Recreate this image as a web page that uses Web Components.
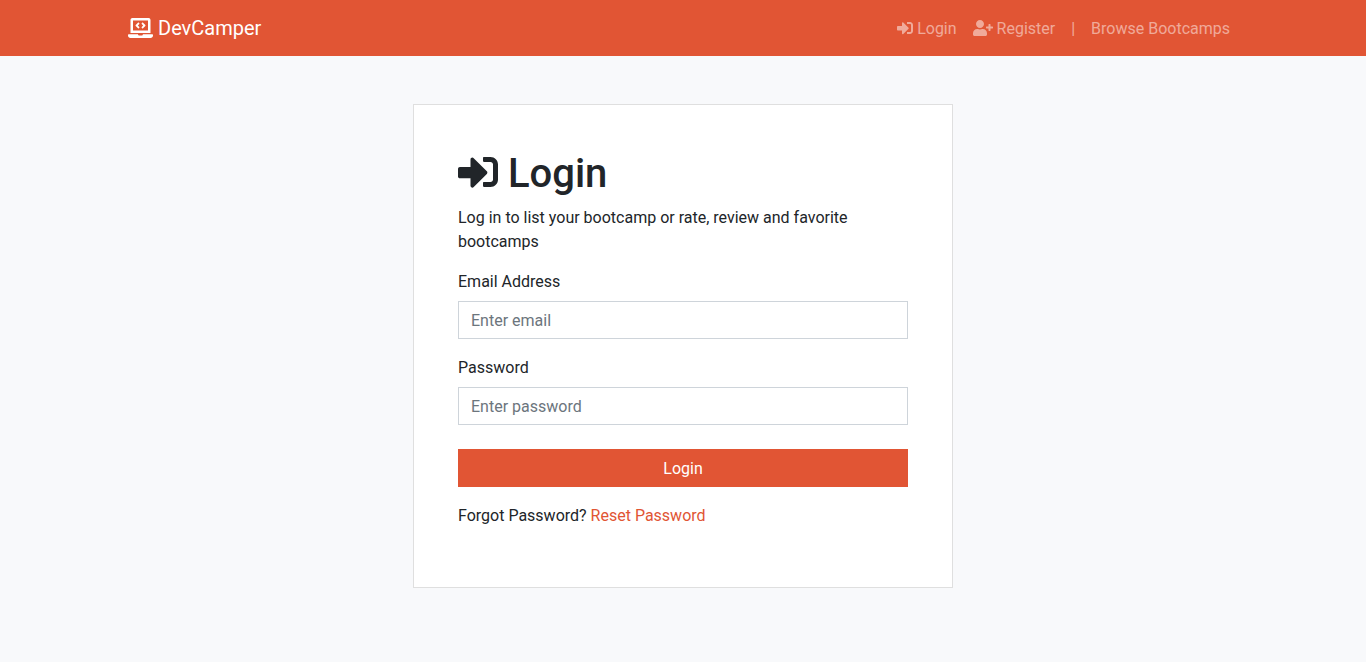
<!DOCTYPE html>
<html lang="en">
<head>
<meta charset="utf-8">
<meta name="viewport" content="width=device-width, initial-scale=1">
<title>DevCamper | Login</title>
<style>
  :root {
    --primary: #e15534;
    --dark: #212529;
    --muted: #6c757d;
    --light: #f8f9fb;
    --input-border: #ced4da;
  }
  body {
    margin: 0;
    background: var(--light);
    color: var(--dark);
    font: 400 16px/24px Roboto, "Liberation Sans", sans-serif;
  }
</style>
</head>
<body>
<site-navbar>
  <site-icon slot="brand" name="laptop-code"></site-icon>
  <span slot="brand">DevCamper</span>
  <nav-item href="#login"><site-icon name="sign-in"></site-icon> Login</nav-item>
  <nav-item href="#register"><site-icon name="user-plus"></site-icon> Register</nav-item>
  <nav-item>|</nav-item>
  <nav-item href="#bootcamps">Browse Bootcamps</nav-item>
</site-navbar>
<main>
  <page-card>
    <login-form></login-form>
  </page-card>
</main>

<script>
const ICONS = {
  'sign-in': [512, 'M416 448h-84c-6.6 0-12-5.4-12-12v-40c0-6.6 5.4-12 12-12h84c17.7 0 32-14.3 32-32V160c0-17.7-14.3-32-32-32h-84c-6.6 0-12-5.4-12-12V76c0-6.6 5.4-12 12-12h84c53 0 96 43 96 96v192c0 53-43 96-96 96zm-47-201L201 79c-15-15-41-4.5-41 17v96H24c-13.3 0-24 10.7-24 24v96c0 13.3 10.7 24 24 24h136v96c0 21.5 26 32 41 17l168-168c9.3-9.4 9.3-24.6 0-34z'],
  'user-plus': [640, 'M624 208h-64v-64c0-8.8-7.2-16-16-16h-32c-8.8 0-16 7.2-16 16v64h-64c-8.8 0-16 7.2-16 16v32c0 8.8 7.2 16 16 16h64v64c0 8.8 7.2 16 16 16h32c8.8 0 16-7.2 16-16v-64h64c8.8 0 16-7.2 16-16v-32c0-8.8-7.2-16-16-16zm-400 48c70.7 0 128-57.3 128-128S294.7 0 224 0 96 57.3 96 128s57.3 128 128 128zm89.6 32h-16.7c-22.2 10.2-46.9 16-72.9 16s-50.6-5.8-72.9-16h-16.7C60.2 288 0 348.2 0 422.4V464c0 26.5 21.5 48 48 48h352c26.5 0 48-21.5 48-48v-41.6c0-74.2-60.2-134.4-134.4-134.4z'],
  'laptop-code': [640, 'M255.03 261.65c6.25 6.25 16.38 6.25 22.63 0l11.31-11.31c6.25-6.25 6.25-16.38 0-22.63L253.25 192l35.71-35.72c6.25-6.25 6.25-16.38 0-22.63l-11.31-11.31c-6.25-6.25-16.38-6.25-22.63 0l-58.34 58.34c-6.25 6.25-6.25 16.38 0 22.63l58.35 58.34zm96.01-11.3l11.31 11.31c6.25 6.25 16.38 6.25 22.63 0l58.34-58.34c6.25-6.25 6.25-16.38 0-22.63l-58.34-58.34c-6.25-6.25-16.38-6.25-22.63 0l-11.31 11.31c-6.25 6.25-6.25 16.38 0 22.63L386.75 192l-35.71 35.72c-6.25 6.25-6.25 16.38 0 22.63zM624 416H381.54c-.74 19.81-14.71 32-32.74 32H288c-18.69 0-33.02-17.47-32.77-32H16c-8.8 0-16 7.2-16 16v16c0 35.2 28.8 64 64 64h512c35.2 0 64-28.8 64-64v-16c0-8.8-7.2-16-16-16zM576 48c0-26.4-21.6-48-48-48H112C85.6 0 64 21.6 64 48v336h512V48zm-64 272H128V64h384v256z']
};

class SiteIcon extends HTMLElement {
  constructor() {
    super();
    this.attachShadow({ mode: 'open' });
  }
  connectedCallback() {
    const [width, path] = ICONS[this.getAttribute('name')];
    this.shadowRoot.innerHTML = `
      <style>
        :host { display: inline-block; height: 1em; line-height: 1; vertical-align: -0.125em; }
        svg { display: block; height: 1em; fill: currentColor; }
      </style>
      <svg viewBox="0 0 ${width} 512" aria-hidden="true"><path d="${path}"/></svg>`;
  }
}

class SiteNavbar extends HTMLElement {
  constructor() {
    super();
    this.attachShadow({ mode: 'open' }).innerHTML = `
      <style>
        :host { display: block; background: var(--primary); color: #fff; }
        nav {
          display: flex; flex-wrap: wrap; align-items: center; justify-content: space-between;
          max-width: 1110px; margin: 0 auto; padding: 8px 16px;
        }
        .brand {
          display: flex; align-items: center; gap: 5px; padding: 5px 0;
          color: inherit; font-size: 20px; line-height: 30px; text-decoration: none;
        }
        .links { display: flex; flex-wrap: wrap; }
      </style>
      <nav aria-label="Main">
        <a class="brand" href="#home"><slot name="brand"></slot></a>
        <div class="links"><slot></slot></div>
      </nav>`;
  }
}

class NavItem extends HTMLElement {
  constructor() {
    super();
    this.attachShadow({ mode: 'open' });
  }
  connectedCallback() {
    const href = this.getAttribute('href');
    const tag = href ? 'a' : 'span';
    this.shadowRoot.innerHTML = `
      <style>
        :host { display: block; }
        a, span { display: block; padding: 9px 8px 7px; color: rgba(255, 255, 255, .5); text-decoration: none; }
        a:hover { color: rgba(255, 255, 255, .75); }
      </style>
      <${tag}${href ? ` href="${href}"` : ''}><slot></slot></${tag}>`;
  }
}

class PageCard extends HTMLElement {
  constructor() {
    super();
    this.attachShadow({ mode: 'open' }).innerHTML = `
      <style>
        :host { display: block; padding: 48px 16px; }
        section {
          box-sizing: border-box; max-width: 540px; margin: 0 auto; padding: 45px 44px 43px;
          background: #fff; border: 1px solid #dfdfdf;
        }
      </style>
      <section><slot></slot></section>`;
  }
}

class FormField extends HTMLElement {
  static formAssociated = true;
  constructor() {
    super();
    this.internals = this.attachInternals();
    this.attachShadow({ mode: 'open' });
  }
  connectedCallback() {
    this.shadowRoot.innerHTML = `
      <style>
        :host { display: block; }
        label { display: block; margin-bottom: 7px; }
        input {
          display: block; box-sizing: border-box; width: 100%; height: 38px; margin: 0; padding: 6px 12px;
          border: 1px solid var(--input-border); border-radius: 0; background: #fff;
          color: #495057; font: inherit;
        }
        input::placeholder { color: var(--muted); opacity: 1; }
        input:focus { outline: 0; border-color: var(--primary); }
      </style>
      <label for="control">${this.getAttribute('label')}</label>
      <input id="control" type="${this.getAttribute('type')}" placeholder="${this.getAttribute('placeholder')}" required>`;
    const input = this.shadowRoot.querySelector('input');
    input.addEventListener('input', () => this.internals.setFormValue(input.value));
    input.addEventListener('keydown', event => {
      if (event.key === 'Enter' && this.internals.form) this.internals.form.requestSubmit();
    });
  }
}

class LoginForm extends HTMLElement {
  constructor() {
    super();
    this.attachShadow({ mode: 'open' }).innerHTML = `
      <style>
        :host { display: block; }
        h1 { margin: 0 0 8px; font-size: 40px; line-height: 48px; font-weight: 500; }
        p { margin: 0 0 16px; }
        form { display: grid; gap: 17px; margin-bottom: 17px; }
        button {
          width: 100%; height: 38px; margin: 7px 0 0; padding: 7px 12px 5px;
          border: 1px solid var(--primary); border-radius: 0; background: var(--primary);
          color: #fff; font: inherit; cursor: pointer;
        }
        a { color: var(--primary); text-decoration: none; }
        a:hover { text-decoration: underline; }
      </style>
      <h1><site-icon name="sign-in"></site-icon> Login</h1>
      <p>Log in to list your bootcamp or rate, review and favorite bootcamps</p>
      <form>
        <form-field name="email" type="email" label="Email Address" placeholder="Enter email"></form-field>
        <form-field name="password" type="password" label="Password" placeholder="Enter password"></form-field>
        <button type="submit">Login</button>
      </form>
      <p>Forgot Password? <a href="#reset">Reset Password</a></p>`;
  }
}

customElements.define('site-icon', SiteIcon);
customElements.define('nav-item', NavItem);
customElements.define('site-navbar', SiteNavbar);
customElements.define('page-card', PageCard);
customElements.define('form-field', FormField);
customElements.define('login-form', LoginForm);
</script>
</body>
</html>
